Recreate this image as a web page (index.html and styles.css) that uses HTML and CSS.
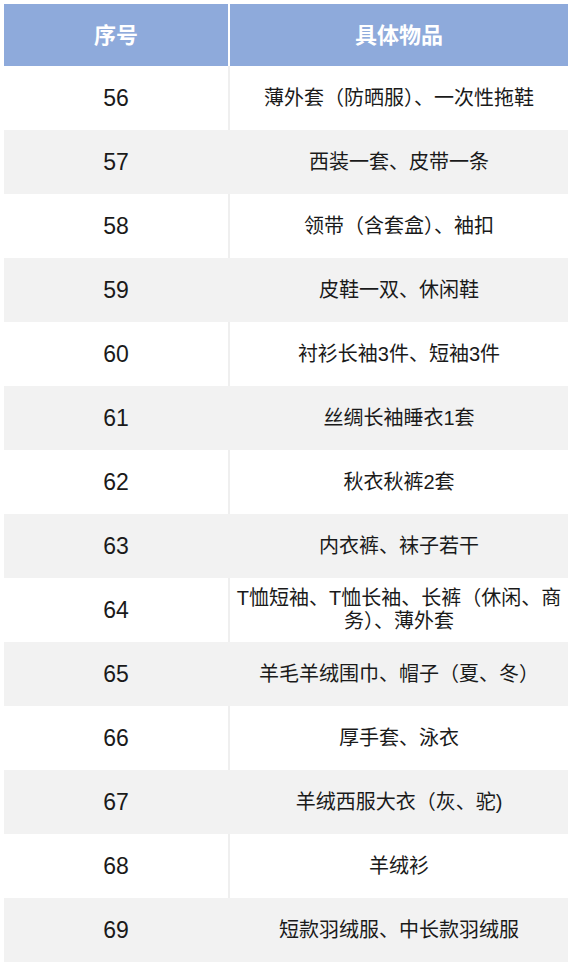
FILE: index.html
```html
<!DOCTYPE html>
<html lang="zh">
<head>
<meta charset="utf-8">
<link rel="stylesheet" href="styles.css">
</head>
<body>
<div class="table">
  <div class="row head"><div class="cell">序号</div><div class="cell">具体物品</div></div>
  <div class="row odd"><div class="cell num">56</div><div class="cell">薄外套（防晒服）、一次性拖鞋</div></div>
  <div class="row even"><div class="cell num">57</div><div class="cell">西装一套、皮带一条</div></div>
  <div class="row odd"><div class="cell num">58</div><div class="cell">领带（含套盒）、袖扣</div></div>
  <div class="row even"><div class="cell num">59</div><div class="cell">皮鞋一双、休闲鞋</div></div>
  <div class="row odd"><div class="cell num">60</div><div class="cell">衬衫长袖3件、短袖3件</div></div>
  <div class="row even"><div class="cell num">61</div><div class="cell">丝绸长袖睡衣1套</div></div>
  <div class="row odd"><div class="cell num">62</div><div class="cell">秋衣秋裤2套</div></div>
  <div class="row even"><div class="cell num">63</div><div class="cell">内衣裤、袜子若干</div></div>
  <div class="row odd"><div class="cell num">64</div><div class="cell">T恤短袖、T恤长袖、长裤（休闲、商务）、薄外套</div></div>
  <div class="row even"><div class="cell num">65</div><div class="cell">羊毛羊绒围巾、帽子（夏、冬）</div></div>
  <div class="row odd"><div class="cell num">66</div><div class="cell">厚手套、泳衣</div></div>
  <div class="row even"><div class="cell num">67</div><div class="cell">羊绒西服大衣（灰、驼)</div></div>
  <div class="row odd"><div class="cell num">68</div><div class="cell">羊绒衫</div></div>
  <div class="row even"><div class="cell num">69</div><div class="cell">短款羽绒服、中长款羽绒服</div></div>
</div>
</body>
</html>
```

FILE: styles.css
```css
html, body {
  margin: 0;
  padding: 0;
  background: #ffffff;
}
body {
  padding: 4px 0 0 4px;
  font-family: "Liberation Sans", "Noto Sans CJK SC", sans-serif;
  color: #1a1a1a;
}
.table {
  width: 564px;
  display: flex;
  flex-direction: column;
}
.row {
  display: grid;
  grid-template-columns: 224px 338px;
  column-gap: 2px;
  height: 64px;
}
.cell {
  display: flex;
  align-items: center;
  justify-content: center;
  text-align: center;
  font-size: 20px;
  line-height: 23px;
  padding: 0 4px;
}
.num {
  font-size: 23px;
}
.head {
  height: 62px;
  background: #ffffff;
}
.head .cell {
  background: #8eaadb;
  color: #ffffff;
  font-weight: bold;
  font-size: 22px;
}
.odd {
  background: #efefef;
}
.odd .cell {
  background: #ffffff;
}
.even {
  background: #f2f2f2;
}
.even .cell {
  background: #f2f2f2;
}
```
